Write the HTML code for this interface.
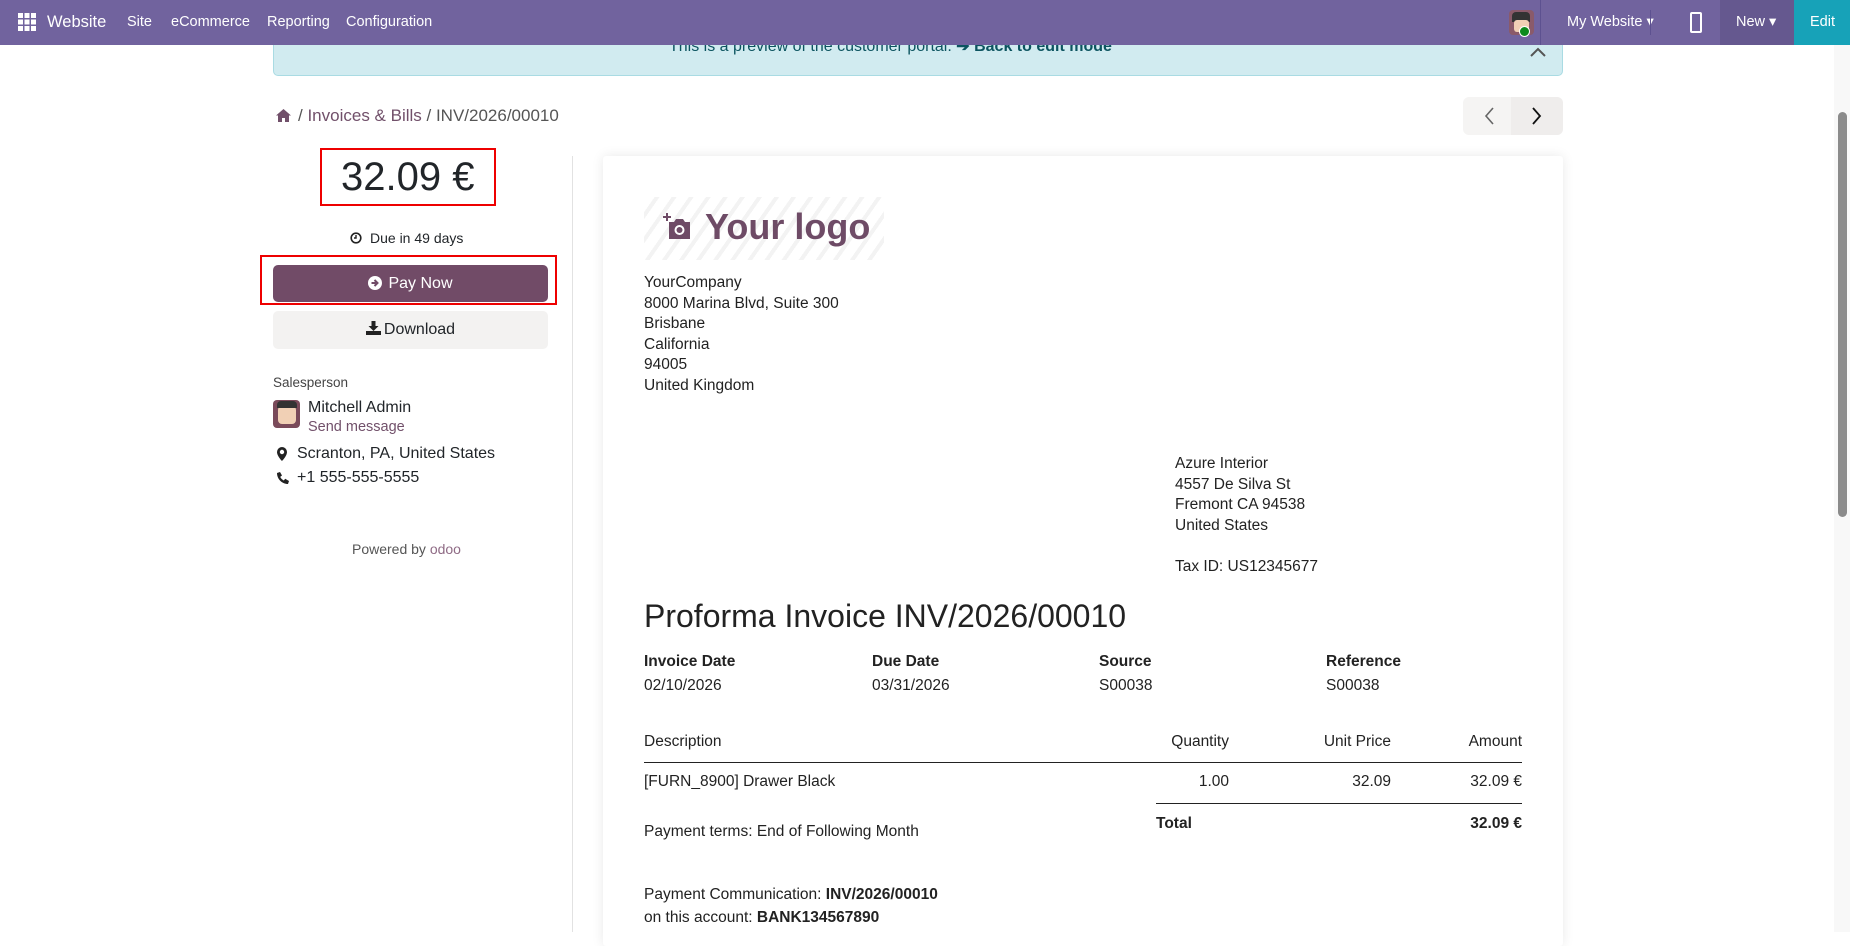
<!DOCTYPE html>
<html><head><meta charset="utf-8"><style>
*{box-sizing:border-box;margin:0;padding:0}
body{width:1850px;height:932px;overflow:hidden;background:#fff;font-family:"Liberation Sans",sans-serif;color:#212529;position:relative}
.a{position:absolute;white-space:nowrap}
.nav{left:0;top:0;width:1850px;height:45px;background:#71639e;color:#fff;font-size:14.5px}
.nav .a{top:14px}
.inv{font-size:15.5px;color:#222}
.b{font-weight:bold}
</style></head><body>
<div class="a nav">
 <svg class="a" style="left:18px;top:13px" width="18" height="18" viewBox="0 0 18 18" fill="#fff"><rect x="0" y="0" width="5" height="5"/><rect x="6.5" y="0" width="5" height="5"/><rect x="13" y="0" width="5" height="5"/><rect x="0" y="6.5" width="5" height="5"/><rect x="6.5" y="6.5" width="5" height="5"/><rect x="13" y="6.5" width="5" height="5"/><rect x="0" y="13" width="5" height="5"/><rect x="6.5" y="13" width="5" height="5"/><rect x="13" y="13" width="5" height="5"/></svg>
 <span class="a" style="left:47px;top:13px;font-size:16.5px">Website</span>
 <span class="a" style="left:127px">Site</span>
 <span class="a" style="left:171px">eCommerce</span>
 <span class="a" style="left:267px">Reporting</span>
 <span class="a" style="left:346px">Configuration</span>
 <div class="a" style="left:1509px;top:10px;width:25px;height:25px;background:#8a5a6a;border-radius:4px"></div>
 <div class="a" style="left:1512px;top:12px;width:18px;height:10px;background:#333;border-radius:4px 4px 0 0"></div>
 <div class="a" style="left:1514px;top:20px;width:15px;height:12px;background:#f1d0b5;border-radius:3px"></div>
 <div class="a" style="left:1519px;top:26px;width:11px;height:11px;background:#0c8a1c;border-radius:50%;border:1.5px solid #fff"></div>
 <div class="a" style="left:1540px;top:0;width:1px;height:45px;background:#5d5190"></div>
 <span class="a" style="left:1567px">My Website ▾</span>
 <div class="a" style="left:1650px;top:10px;width:1px;height:25px;background:#5d5190"></div>
 <div class="a" style="left:1690px;top:12px;width:12px;height:21px;border:2px solid #fff;border-radius:2px"></div>
 <div class="a" style="left:1720px;top:0;width:74px;height:45px;background:#65588f"></div>
 <span class="a" style="left:1736px">New ▾</span>
 <div class="a" style="left:1794px;top:0;width:56px;height:45px;background:#17a2b8"></div>
 <span class="a" style="left:1810px">Edit</span>
</div>
<div class="a" style="left:273px;top:45px;width:1290px;height:31px;background:#d1ebf0;border:1px solid #a9dbe3;border-top:none;border-radius:0 0 5px 5px;overflow:hidden">
 <span class="a" style="left:395px;top:-9px;font-size:16px;color:#0c5460">This is a preview of the customer portal. <b>➔ Back to edit mode</b></span>
 <svg class="a" style="right:16px;top:2px" width="16" height="10" viewBox="0 0 16 10"><path d="M1 9L8 2l7 7" stroke="#555" stroke-width="2" fill="none"/></svg>
</div>
<svg class="a" style="left:276px;top:109px" width="15" height="13" viewBox="0 0 15 13" fill="#71506a"><path d="M7.5 0L0 6.5h2V13h4V9h3v4h4V6.5h2z"/></svg>
<span class="a" style="left:298px;top:106px;font-size:17px;color:#555">/ <span style="color:#71506a">Invoices &amp; Bills</span> / INV/2026/00010</span>
<div class="a" style="left:1463px;top:97px;width:100px;height:38px;background:#f5f4f3;border-radius:6px"></div>
<div class="a" style="left:1511px;top:97px;width:52px;height:38px;background:#efedec;border-radius:0 6px 6px 0"></div>
<svg class="a" style="left:1483px;top:107px" width="12" height="18" viewBox="0 0 12 18"><path d="M10 1L3 9l7 8" stroke="#666" stroke-width="1.6" fill="none"/></svg>
<svg class="a" style="left:1531px;top:107px" width="12" height="18" viewBox="0 0 12 18"><path d="M2 1l7 8-7 8" stroke="#111" stroke-width="1.8" fill="none"/></svg>
<div class="a" style="left:320px;top:148px;width:176px;height:58px;border:2px solid #e00"></div>
<span class="a" style="left:341px;top:155px;font-size:40px;color:#212529">32.09 €</span>
<svg class="a" style="left:350px;top:232px" width="12" height="12" viewBox="0 0 12 12"><circle cx="6" cy="6" r="4.8" stroke="#222" stroke-width="1.6" fill="none"/><path d="M6 3v3h-2" stroke="#222" stroke-width="1.4" fill="none"/></svg>
<span class="a" style="left:370px;top:230px;font-size:14px">Due in 49 days</span>
<div class="a" style="left:260px;top:255px;width:297px;height:50px;border:2px solid #e00"></div>
<div class="a" style="left:273px;top:265px;width:275px;height:37px;background:#714b67;border-radius:5px;color:#fff;font-size:16px;text-align:center;line-height:37px"><svg width="14" height="14" viewBox="0 0 14 14" style="vertical-align:-2px;margin-right:6px"><circle cx="7" cy="7" r="7" fill="#fff"/><path d="M3.5 7h5M6.5 4l3 3-3 3" stroke="#714b67" stroke-width="2" fill="none"/></svg>Pay Now</div>
<div class="a" style="left:273px;top:311px;width:275px;height:38px;background:#f3f2f1;border-radius:5px;font-size:16px;text-align:center;line-height:38px"><svg width="15" height="14" viewBox="0 0 15 14" style="vertical-align:-1px;margin-right:3px"><path d="M5.5 0h4v5h3l-5 5-5-5h3z" fill="#222"/><rect x="0" y="10" width="15" height="4" fill="#222"/></svg>Download</div>
<span class="a" style="left:273px;top:375px;font-size:13.5px;color:#444">Salesperson</span>
<div class="a" style="left:273px;top:400px;width:27px;height:28px;background:#7a4a5a;border-radius:4px"></div>
<div class="a" style="left:278px;top:406px;width:18px;height:18px;background:#f1d0b5;border-radius:4px"></div>
<div class="a" style="left:277px;top:401px;width:20px;height:7px;background:#333;border-radius:4px 4px 0 0"></div>
<span class="a" style="left:308px;top:399px;font-size:16px">Mitchell Admin</span>
<span class="a" style="left:308px;top:419px;font-size:14.5px;color:#71506a">Send message</span>
<svg class="a" style="left:277px;top:447px" width="10" height="14" viewBox="0 0 10 14"><path d="M5 0a5 5 0 0 0-5 5c0 4 5 9 5 9s5-5 5-9a5 5 0 0 0-5-5zm0 2.8a2.2 2.2 0 1 1 0 4.4 2.2 2.2 0 0 1 0-4.4z" fill="#222"/></svg>
<span class="a" style="left:297px;top:445px;font-size:16px">Scranton, PA, United States</span>
<svg class="a" style="left:276px;top:472px" width="13" height="13" viewBox="0 0 13 13"><path d="M1 1l3-1 2 3.5-1.8 1.4c.8 1.6 2 2.8 3.6 3.6L9.2 6.7 13 9l-1 3c-6 0-11-5-11-11z" fill="#222"/></svg>
<span class="a" style="left:297px;top:469px;font-size:16px">+1 555-555-5555</span>
<span class="a" style="left:352px;top:541px;font-size:14px;color:#555">Powered by <span style="color:#8f6b85">odoo</span></span>
<div class="a" style="left:572px;top:156px;width:1px;height:776px;background:#e2e2e2"></div>
<div class="a" style="left:603px;top:156px;width:960px;height:790px;background:#fff;box-shadow:0 0 12px rgba(0,0,0,.09);border-radius:3px"></div>
<div class="a" style="left:644px;top:197px;width:240px;height:63px;background:repeating-linear-gradient(-55deg,#fff 0 10px,#f3f3f3 10px 14px)"></div>
<svg class="a" style="left:663px;top:213px" width="30" height="30" viewBox="0 0 30 30" fill="#6e4b66"><path d="M3 0h2v3h3v2H5v3H3V5H0V3h3z"/><path d="M6 9h5l2-3h7l2 3h5v17H6z"/><circle cx="16.5" cy="17" r="5" fill="#fff"/><circle cx="16.5" cy="17" r="3"/></svg>
<span class="a" style="left:705px;top:206px;font-size:36px;font-weight:bold;color:#6e4b66">Your logo</span>
<div class="a inv" style="left:644px;top:273px;line-height:20.5px">YourCompany<br>8000 Marina Blvd, Suite 300<br>Brisbane<br>California<br>94005<br>United Kingdom</div>
<div class="a inv" style="left:1175px;top:454px;line-height:20.5px">Azure Interior<br>4557 De Silva St<br>Fremont CA 94538<br>United States<br><br>Tax ID: US12345677</div>
<span class="a" style="left:644px;top:598px;font-size:32px;color:#222">Proforma Invoice INV/2026/00010</span>
<div class="a inv b" style="left:644px;top:653px">Invoice Date</div>
<div class="a inv b" style="left:872px;top:653px">Due Date</div>
<div class="a inv b" style="left:1099px;top:653px">Source</div>
<div class="a inv b" style="left:1326px;top:653px">Reference</div>
<div class="a inv" style="left:644px;top:677px">02/10/2026</div>
<div class="a inv" style="left:872px;top:677px">03/31/2026</div>
<div class="a inv" style="left:1099px;top:677px">S00038</div>
<div class="a inv" style="left:1326px;top:677px">S00038</div>
<div class="a inv" style="left:644px;top:733px">Description</div>
<div class="a inv" style="right:621px;top:733px">Quantity</div>
<div class="a inv" style="right:459px;top:733px">Unit Price</div>
<div class="a inv" style="right:328px;top:733px">Amount</div>
<div class="a" style="left:644px;top:762px;width:878px;height:1px;background:#222"></div>
<div class="a inv" style="left:644px;top:773px">[FURN_8900] Drawer Black</div>
<div class="a inv" style="right:621px;top:773px">1.00</div>
<div class="a inv" style="right:459px;top:773px">32.09</div>
<div class="a inv" style="right:328px;top:773px">32.09 €</div>
<div class="a" style="left:1156px;top:803px;width:366px;height:1px;background:#222"></div>
<div class="a inv b" style="left:1156px;top:815px">Total</div>
<div class="a inv b" style="right:328px;top:815px">32.09 €</div>
<div class="a inv" style="left:644px;top:823px">Payment terms: End of Following Month</div>
<div class="a inv" style="left:644px;top:886px">Payment Communication: <b>INV/2026/00010</b></div>
<div class="a inv" style="left:644px;top:909px">on this account: <b>BANK134567890</b></div>
<div class="a" style="left:1834px;top:45px;width:16px;height:887px;background:#f8f8f8"></div>
<div class="a" style="left:1838px;top:112px;width:9px;height:405px;background:#8b8b8b;border-radius:5px"></div>
</body></html>
